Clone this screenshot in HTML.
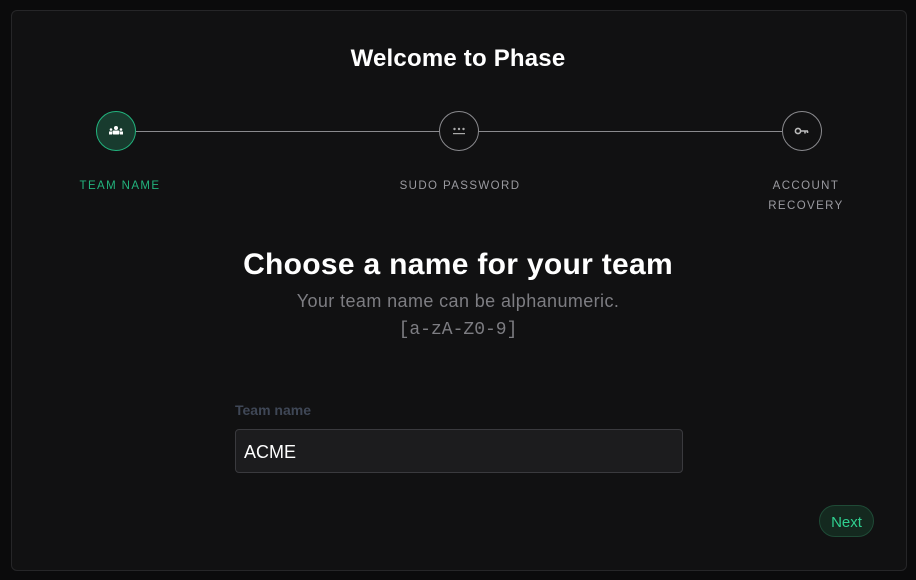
<!DOCTYPE html>
<html><head><style>
body{margin:0;width:916px;height:580px;background:#0b0b0c;font-family:"Liberation Sans",sans-serif;overflow:hidden;position:relative}
.card{position:absolute;left:11px;top:10px;width:894px;height:559px;background:#111112;border:1px solid #262628;border-radius:6px}
.abs{position:absolute}
.t{left:0;width:916px;text-align:center}
.c{width:38px;height:38px;border-radius:50%;border:1px solid #8a8a8e;position:absolute;top:111px;display:flex;align-items:center;justify-content:center}
.lbl{position:absolute;font-size:11.5px;letter-spacing:1.4px;color:#9a9aa0;text-align:center;line-height:20px}
</style></head><body>
<div class="card"></div>
<div class="abs t" style="top:45px;font-size:24px;font-weight:bold;color:#fff;letter-spacing:0.2px">Welcome to Phase</div>
<div class="abs" style="left:136px;top:131px;width:646px;height:1px;background:#8a8a8e"></div>
<div class="c" style="left:96px;background:#183b2e;border-color:#22b37d">
<svg width="16" height="10" viewBox="0 0 16 10" fill="#fff"><circle cx="8" cy="2" r="2"/><rect x="4.5" y="4.5" width="7" height="4" rx="1"/><circle cx="3" cy="3.5" r="1.3"/><rect x="1" y="5.5" width="3" height="3"/><circle cx="13" cy="3.5" r="1.3"/><rect x="12" y="5.5" width="3" height="3"/></svg></div>
<div class="c" style="left:439px;background:#111112">
<svg width="16" height="10" viewBox="0 0 16 10" fill="#aaa"><circle cx="3.5" cy="3" r="1.2"/><circle cx="8" cy="3" r="1.2"/><circle cx="12.5" cy="3" r="1.2"/><rect x="2" y="7" width="12" height="1.2"/></svg></div>
<div class="c" style="left:782px;background:#111112">
<svg width="16" height="10" viewBox="0 0 16 10" fill="none" stroke="#bbb" stroke-width="1.6"><circle cx="4" cy="5" r="2.6"/><path d="M6.6 5H14M11 5v2.5M13.5 5v2"/></svg></div>
<div class="lbl" style="left:60px;width:120px;top:176px;color:#22b37d">TEAM NAME</div>
<div class="lbl" style="left:380px;width:160px;top:176px">SUDO PASSWORD</div>
<div class="lbl" style="left:750px;width:112px;top:176px">ACCOUNT<br>RECOVERY</div>
<div class="abs t" style="top:248px;font-size:30px;font-weight:bold;color:#fff;letter-spacing:0.3px">Choose a name for your team</div>
<div class="abs t" style="top:291px;font-size:18px;color:#7d7d82;letter-spacing:0.4px">Your team name can be alphanumeric.</div>
<div class="abs t" style="top:320px;font-size:18px;color:#7d7d82;font-family:'Liberation Mono',monospace">[a-zA-Z0-9]</div>
<div class="abs" style="left:235px;top:402px;font-size:14px;font-weight:bold;color:#3f4756">Team name</div>
<div class="abs" style="left:235px;top:429px;width:446px;height:42px;background:#1c1c1e;border:1px solid #3a3a3e;border-radius:4px"><div style="padding:12px 8px;font-size:18px;color:#fff">ACME</div></div>
<div class="abs" style="left:819px;top:505px;width:53px;height:30px;border-radius:16px;background:#14291f;border:1px solid #1f4a36;color:#2fcf8f;font-size:15px;text-align:center;line-height:33px">Next</div>
</body></html>
